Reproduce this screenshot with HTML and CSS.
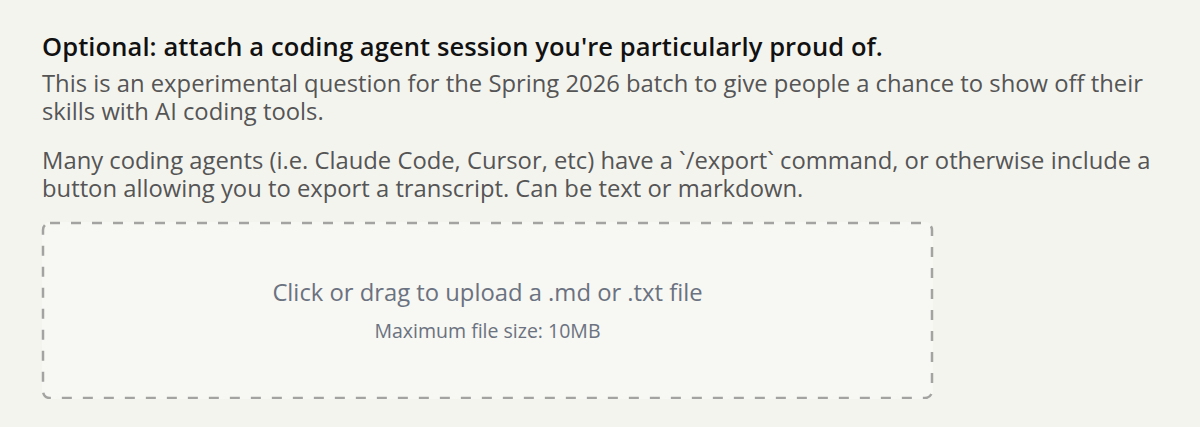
FILE: index.html
```html
<!DOCTYPE html>
<html lang="en">
<head>
<meta charset="utf-8">
<title>Coding agent session</title>
<link rel="stylesheet" href="styles.css">
</head>
<body>
<main class="question">
  <h2 class="question-title">Optional: attach a coding agent session you're particularly proud of.</h2>
  <p class="question-text">This is an experimental question for the Spring 2026 batch to give people a chance to show off their skills with AI coding tools.</p>
  <p class="question-text">Many coding agents (i.e. Claude Code, Cursor, etc) have a `/export` command, or otherwise include a button allowing you to export a transcript. Can be text or markdown.</p>
  <div class="dropzone">
    <svg class="dropzone-border" aria-hidden="true"><rect x="1" y="1" rx="7" ry="7"></rect></svg>
    <div class="dropzone-main">Click or drag to upload a .md or .txt file</div>
    <div class="dropzone-sub">Maximum file size: 10MB</div>
  </div>
</main>
</body>
</html>
```

FILE: styles.css
```css
html, body {
  margin: 0;
  padding: 0;
  background: #f4f4ef;
}
body {
  font-family: "Open Sans", "Noto Sans", sans-serif;
}
.question {
  padding: 31px 0 0 42px;
  width: 1120px;
}
.question-title {
  margin: 0 0 8px 0;
  font-size: 25.5px;
  line-height: 30px;
  font-weight: 600;
  letter-spacing: 0.1px;
  color: #111111;
}
.question-text {
  margin: 0 0 21px 0;
  font-size: 23.8px;
  line-height: 28px;
  color: #555555;
}
.question-text + .question-text {
  margin-bottom: 20px;
}
.dropzone {
  position: relative;
  width: 891px;
  height: 177px;
  box-sizing: border-box;
  background: #f7f7f3;
  border-radius: 8px;
  display: flex;
  flex-direction: column;
  align-items: center;
  justify-content: center;
  gap: 13px;
}
.dropzone-border {
  position: absolute;
  inset: 0;
  width: 100%;
  height: 100%;
  overflow: visible;
}
.dropzone-border rect {
  width: calc(100% - 2px);
  height: calc(100% - 2px);
  fill: none;
  stroke: #a3a3a1;
  stroke-width: 2.5;
  stroke-dasharray: 10 11;
}
.dropzone-main {
  font-size: 23.8px;
  line-height: 28px;
  font-weight: 500;
  color: #6b7280;
}
.dropzone-sub {
  font-size: 19.5px;
  line-height: 24px;
  font-weight: 500;
  color: #6b7280;
}
```
